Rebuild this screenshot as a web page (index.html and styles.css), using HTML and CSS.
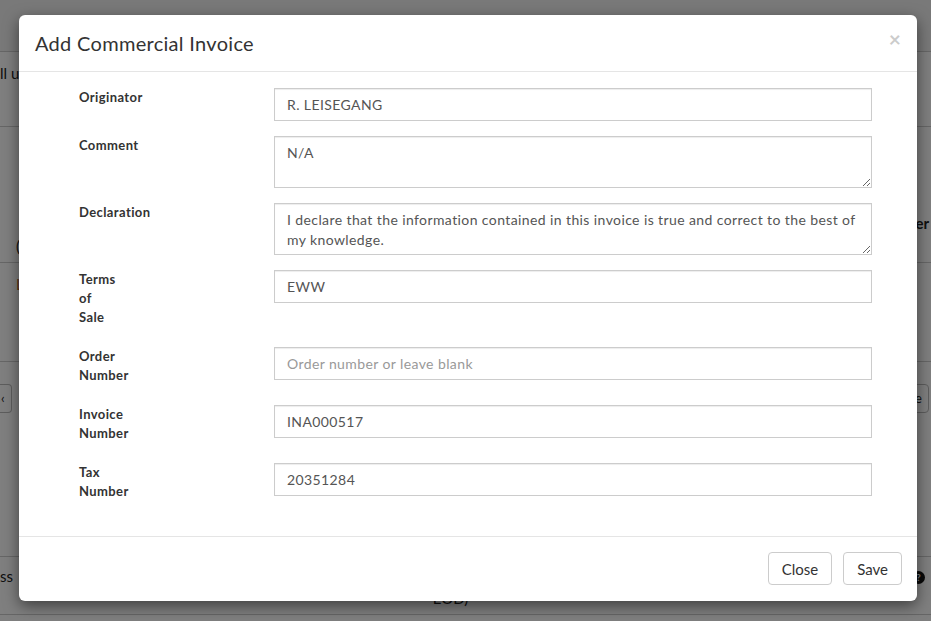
FILE: index.html
```html
<!DOCTYPE html>
<html lang="en">
<head>
<meta charset="utf-8">
<title>Add Commercial Invoice</title>
<link rel="stylesheet" href="styles.css">
</head>
<body>
<div class="page">
  <div class="bg-nav"></div>
  <div class="bg-row bg-row-1"><span class="bg-text">ll users</span></div>
  <div class="bg-row bg-row-2">
    <span class="bg-paren">(</span>
    <span class="bg-bold">Number</span>
  </div>
  <div class="bg-row bg-row-3"><span class="bg-brown">L</span></div>
  <div class="bg-row bg-row-4">
    <span class="bg-btn bg-btn-left">&lsaquo;</span>
    <span class="bg-btn bg-btn-right">e</span>
  </div>
  <div class="bg-row bg-row-5">
    <span class="bg-text">ss</span>
    <span class="bg-eod">EOD)</span>
    <span class="bg-icon">?</span>
  </div>
</div>

<div class="overlay">
  <div class="modal">
    <div class="modal-header">
      <h4 class="modal-title">Add Commercial Invoice</h4>
      <span class="close">&times;</span>
    </div>
    <div class="modal-body">
      <div class="form-row">
        <label class="form-label">Originator</label>
        <input class="form-control" type="text" value="R. LEISEGANG">
      </div>
      <div class="form-row">
        <label class="form-label">Comment</label>
        <textarea class="form-control textarea">N/A</textarea>
      </div>
      <div class="form-row">
        <label class="form-label">Declaration</label>
        <textarea class="form-control textarea">I declare that the information contained in this invoice is true and correct to the best of my knowledge.</textarea>
      </div>
      <div class="form-row">
        <label class="form-label narrow">Terms of Sale</label>
        <input class="form-control" type="text" value="EWW">
      </div>
      <div class="form-row">
        <label class="form-label narrow">Order Number</label>
        <input class="form-control" type="text" placeholder="Order number or leave blank">
      </div>
      <div class="form-row">
        <label class="form-label narrow">Invoice Number</label>
        <input class="form-control" type="text" value="INA000517">
      </div>
      <div class="form-row">
        <label class="form-label narrow">Tax Number</label>
        <input class="form-control" type="text" value="20351284">
      </div>
    </div>
    <div class="modal-footer">
      <button class="btn" type="button">Close</button>
      <button class="btn" type="button">Save</button>
    </div>
  </div>
</div>
</body>
</html>
```

FILE: styles.css
```css
* { box-sizing: border-box; }

html, body {
  margin: 0;
  padding: 0;
  width: 931px;
  height: 621px;
  overflow: hidden;
}

body {
  font-family: Lato, "Liberation Sans", sans-serif;
  color: #333;
  background: #fff;
  position: relative;
}

/* ---------- background page (behind the overlay) ---------- */
.page {
  width: 931px;
  height: 621px;
}

.bg-nav {
  height: 52px;
  background: #f2f2f2;
  border-bottom: 1px solid #ccc;
}

.bg-row {
  border-bottom: 1px solid #ccc;
  display: flex;
  font-size: 15px;
  color: #222;
}

.bg-row-1 { height: 75px; padding-top: 12px; }
.bg-row-2 { height: 136px; justify-content: space-between; align-items: flex-start; }
.bg-row-3 { height: 99px; padding: 12px 0 0 16px; }
.bg-row-4 { height: 195px; padding-top: 22px; justify-content: space-between; }
.bg-row-5 { height: 58px; padding-top: 10px; justify-content: space-between; }

.bg-text { font-size: 15px; }
.bg-paren { padding-left: 16px; font-size: 15px; margin-top: 110px; }
.bg-bold { font-weight: 700; font-size: 15px; margin-top: 87px; margin-right: 2px; }
.bg-brown { color: #b3631a; font-size: 15px; }
.bg-btn {
  display: inline-block;
  height: 29px;
  border: 1px solid #bbb;
  font-size: 13px;
  line-height: 27px;
}
.bg-btn-left {
  width: 12px;
  border-left: none;
  border-radius: 0 4px 4px 0;
  padding-left: 1px;
}
.bg-btn-right {
  width: 30px;
  margin-right: 2px;
  border-radius: 4px;
  text-align: left;
  padding-left: 15px;
}
.bg-eod { font-size: 15px; margin-top: 22px; margin-left: -24px; }
.bg-icon {
  width: 13px;
  height: 13px;
  border-radius: 50%;
  background: #111;
  color: #fff;
  font-size: 9px;
  font-weight: 700;
  line-height: 13px;
  text-align: center;
  margin-right: 6px;
  margin-top: 4px;
}

/* ---------- overlay + modal ---------- */
.overlay {
  position: absolute;
  inset: 0;
  background: rgba(0, 0, 0, 0.5);
  padding: 15px 14px 0 19px;
}

.modal {
  width: 898px;
  background: #fff;
  border-radius: 6px;
  box-shadow: 0 5px 15px rgba(0, 0, 0, 0.5);
}

.modal-header {
  height: 57px;
  border-bottom: 1px solid #e5e5e5;
  padding: 0 16px;
  display: flex;
  align-items: center;
  justify-content: space-between;
}

.modal-title {
  margin: 0;
  font-size: 20px;
  font-weight: 400;
  letter-spacing: 0.3px;
  color: #333;
}

.close {
  font-size: 21px;
  font-weight: 700;
  line-height: 1;
  color: #000;
  opacity: 0.2;
  margin-top: -10px;
  margin-right: 0;
}

.modal-body {
  padding: 16px 45px 15px 60px;
}

.form-row {
  display: grid;
  grid-template-columns: 195px 598px;
  align-items: start;
  margin-bottom: 15px;
}

.form-label {
  display: inline-block;
  font-size: 13px;
  font-weight: 700;
  line-height: 19px;
  letter-spacing: 0.4px;
  margin-bottom: 5px;
  color: #333;
}

.form-label.narrow { width: min-content; }

.form-control {
  display: block;
  width: 598px;
  height: 33px;
  padding: 6px 12px;
  font-family: inherit;
  font-size: 14px;
  letter-spacing: 0.4px;
  line-height: 20px;
  color: #555;
  background: #fff;
  border: 1px solid #ccc;
  border-radius: 0;
  box-shadow: inset 0 1px 1px rgba(0, 0, 0, 0.075);
  outline: none;
  margin: 0;
}

.form-control::placeholder { color: #999; }

.textarea {
  height: 52px;
  resize: vertical;
  overflow: hidden;
}

.modal-footer {
  border-top: 1px solid #e5e5e5;
  padding: 15px 15px 16px;
  display: flex;
  justify-content: flex-end;
  gap: 11px;
}

.btn {
  height: 33px;
  padding: 0 13px;
  font-family: inherit;
  font-size: 15px;
  color: #333;
  background: #fff;
  border: 1px solid #ccc;
  border-radius: 4px;
}
```
